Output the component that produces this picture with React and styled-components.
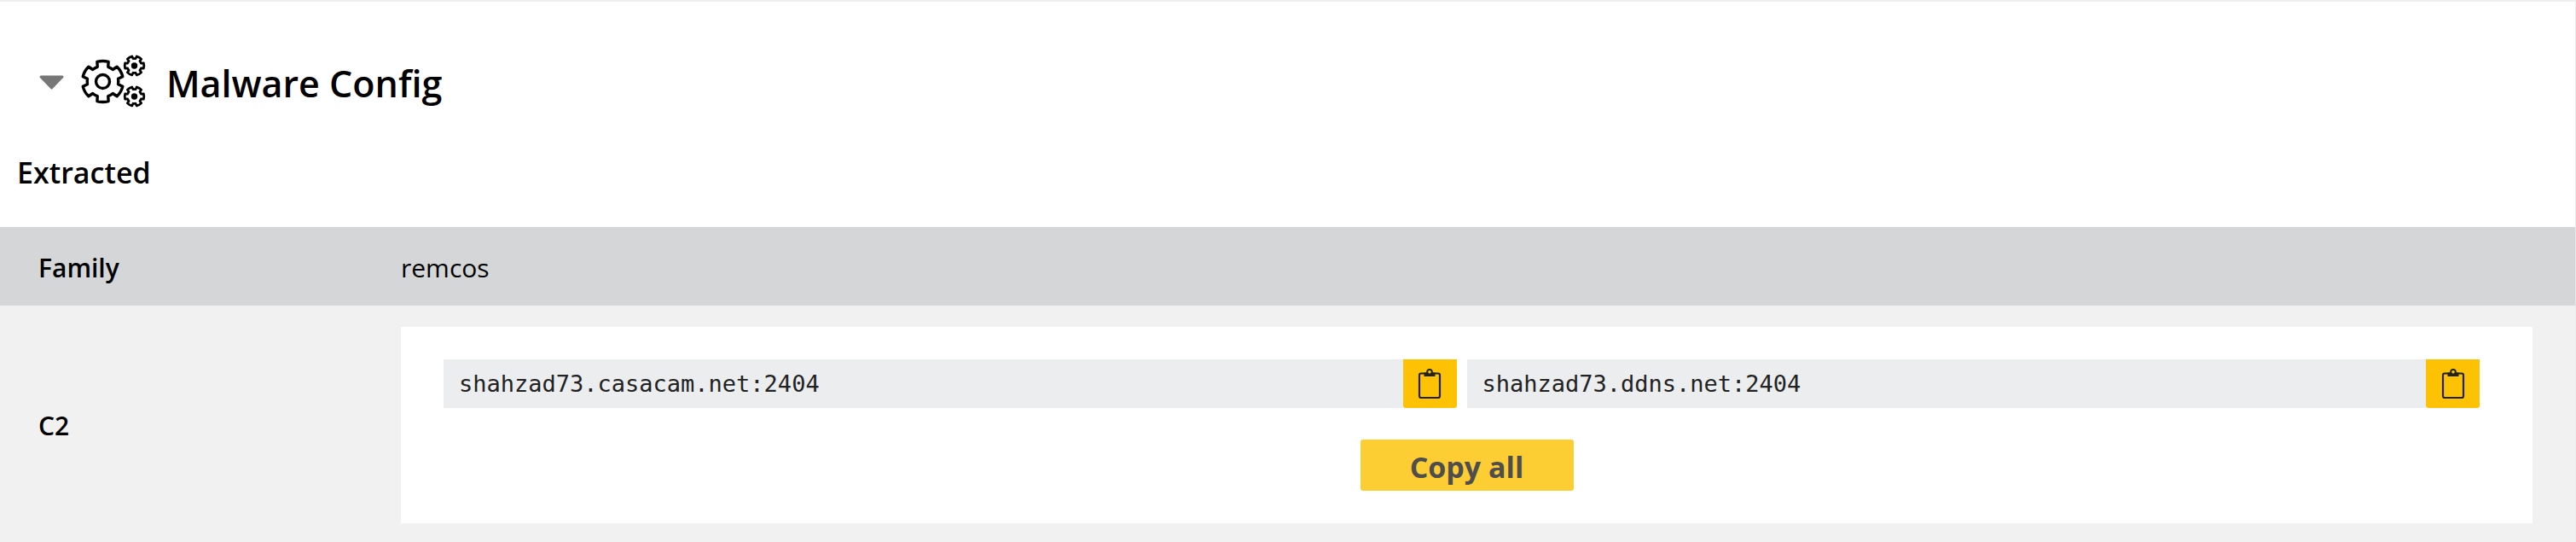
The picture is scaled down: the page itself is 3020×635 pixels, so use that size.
import React, { useState } from "react";
import styled, { createGlobalStyle } from "styled-components";

const GlobalStyle = createGlobalStyle`
  * { box-sizing: border-box; }
  body {
    margin: 0;
    background: #fff;
    color: #000;
    font-family: "Open Sans", "Noto Sans", sans-serif;
  }
`;

const Section = styled.section`
  border-top: 2px solid #eeeeee;
  border-right: 1px solid #eaeaea;
`;

const Header = styled.header`
  display: flex;
  align-items: center;
  padding: 60px 45px 0;
`;

const Toggle = styled.button`
  display: flex;
  padding: 4px 0 0;
  border: 0;
  background: none;
  cursor: pointer;
  svg { transform: ${(p) => (p.$open ? "none" : "rotate(-90deg)")}; }
`;

const GearsIcon = styled.svg`
  flex: none;
  margin: 0 24px 0 19px;
`;

const Title = styled.h2`
  margin: 0;
  padding-top: 6px;
  font-size: 43px;
  font-weight: 600;
  line-height: 60px;
`;

const Subtitle = styled.h3`
  margin: 0;
  padding: 47px 20px 37px;
  font-size: 34px;
  font-weight: 600;
  line-height: 54px;
`;

const ConfigTable = styled.table`
  width: 100%;
  border-collapse: collapse;
  font-size: 30px;
  line-height: 44px;
`;

const Row = styled.tr`
  background: ${(p) => (p.$shaded ? "#d5d6d8" : "#f1f1f1")};
`;

const Label = styled.th`
  width: 470px;
  padding: 26px 45px 22px;
  font-weight: 600;
  text-align: left;
`;

const Value = styled.td`
  padding: ${(p) => (p.$panel ? "25px 50px 22px 0" : "26px 50px 22px 0")};
`;

const Panel = styled.div`
  display: flex;
  flex-direction: column;
  align-items: center;
  gap: 37px;
  padding: 38px 50px;
  background: #fff;
`;

const Hosts = styled.div`
  display: grid;
  grid-template-columns: repeat(2, 1fr);
  width: 100%;
`;

const Host = styled.div`
  display: flex;
  height: 57px;
  margin-right: 12px;
`;

const HostField = styled.input`
  flex: 1;
  min-width: 0;
  padding: 0 18px;
  border: 0;
  border-radius: 0;
  background: #ebedee;
  color: #222;
  font-family: "DejaVu Sans Mono", monospace;
  font-size: 27px;
`;

const CopyButton = styled.button`
  display: flex;
  align-items: center;
  justify-content: center;
  width: 63px;
  padding: 0;
  border: 0;
  border-radius: 0 0 3px 3px;
  background: #fcc203;
  color: #222;
  cursor: pointer;
`;

const CopyAllButton = styled.button`
  width: 250px;
  height: 60px;
  padding: 4px 0 0;
  border: 0;
  border-radius: 3px;
  background: #fdcd34;
  color: #4e4e4e;
  font: 700 34px/46px "Open Sans", "Noto Sans", sans-serif;
  cursor: pointer;
`;

const hosts = ["shahzad73.casacam.net:2404", "shahzad73.ddns.net:2404"];

// Closed outline of a six-toothed gear; `turn` rotates the first tooth, in degrees.
function gearPath(cx, cy, outer, inner, turn) {
  const at = (r, deg) => {
    const a = ((deg + turn - 90) * Math.PI) / 180;
    return `${(cx + r * Math.cos(a)).toFixed(2)} ${(cy + r * Math.sin(a)).toFixed(2)}`;
  };
  let d = "";
  for (let i = 0; i < 6; i += 1) {
    const t = i * 60;
    d += `${i ? "L" : "M"}${at(inner, t - 20)}L${at(outer, t - 16)}`;
    d += `A${outer} ${outer} 0 0 1 ${at(outer, t + 16)}L${at(inner, t + 20)}`;
    d += `A${inner} ${inner} 0 0 1 ${at(inner, t + 40)}`;
  }
  return `${d}Z`;
}

function Gears() {
  return (
    <GearsIcon width="76" height="62" viewBox="0 0 76 62" fill="none" stroke="#000" strokeLinejoin="round" aria-hidden="true">
      <path strokeWidth="3.4" d={gearPath(25.5, 31.5, 24, 18.3, 0)} />
      <circle strokeWidth="3.4" cx="25.5" cy="31.5" r="8" />
      <path strokeWidth="2.8" d={gearPath(62.5, 13, 11.3, 8.4, 30)} />
      <path strokeWidth="2.8" d={gearPath(62.5, 49, 11.3, 8.4, 30)} />
      <circle cx="62.5" cy="13" r="3.7" fill="#000" stroke="none" />
      <circle cx="62.5" cy="49" r="3.7" fill="#000" stroke="none" />
    </GearsIcon>
  );
}

function Clipboard() {
  return (
    <svg width="28" height="37" viewBox="0 0 28 37" fill="none" stroke="currentColor" aria-hidden="true">
      <rect x="2" y="6.5" width="24" height="28.5" rx="2" strokeWidth="2.2" />
      <circle cx="14" cy="4.8" r="2.8" strokeWidth="2" />
      <path d="M7.5 5.5h13v4.5h-13z" fill="currentColor" stroke="none" />
      <circle cx="14" cy="5" r="1.6" fill="#fcc203" stroke="none" />
    </svg>
  );
}

export default function App() {
  const [open, setOpen] = useState(true);
  const copy = (text) => navigator.clipboard?.writeText(text);

  return (
    <>
      <GlobalStyle />
      <Section>
        <Header>
          <Toggle $open={open} aria-label="Toggle Malware Config" aria-expanded={open} onClick={() => setOpen(!open)}>
            <svg width="31" height="18" viewBox="0 0 31 18" aria-hidden="true">
              <path d="M3 2h25L15.5 15z" fill="#777" stroke="#777" strokeWidth="3" strokeLinejoin="round" />
            </svg>
          </Toggle>
          <Gears />
          <Title>Malware Config</Title>
        </Header>
        {open && (
          <>
            <Subtitle>Extracted</Subtitle>
            <ConfigTable>
              <tbody>
                <Row $shaded>
                  <Label scope="row">Family</Label>
                  <Value>remcos</Value>
                </Row>
                <Row>
                  <Label scope="row">C2</Label>
                  <Value $panel>
                    <Panel>
                      <Hosts>
                        {hosts.map((host) => (
                          <Host key={host}>
                            <HostField type="text" readOnly value={host} aria-label="C2 address" />
                            <CopyButton aria-label={`Copy ${host}`} onClick={() => copy(host)}>
                              <Clipboard />
                            </CopyButton>
                          </Host>
                        ))}
                      </Hosts>
                      <CopyAllButton onClick={() => copy(hosts.join("\n"))}>Copy all</CopyAllButton>
                    </Panel>
                  </Value>
                </Row>
              </tbody>
            </ConfigTable>
          </>
        )}
      </Section>
    </>
  );
}
